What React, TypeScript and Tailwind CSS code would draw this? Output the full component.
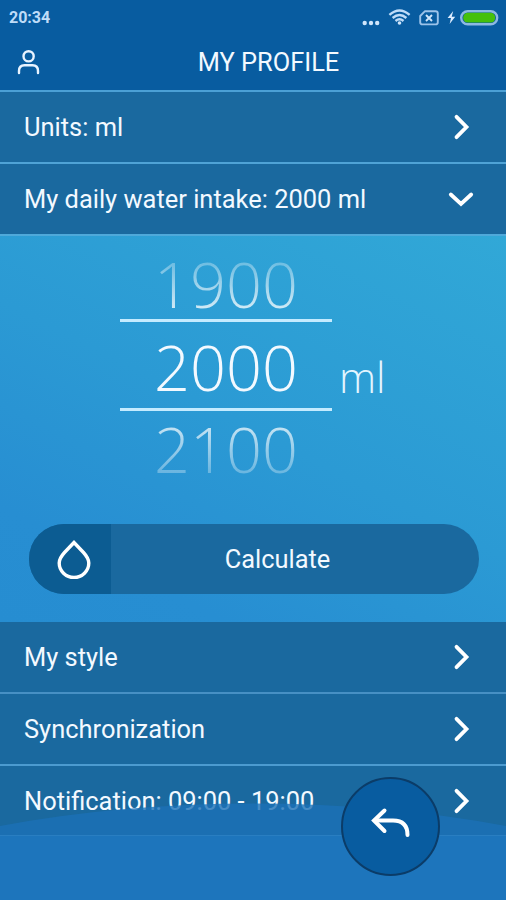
import clsx from 'clsx';

const rows = [
  { label: 'My style', border: 'border-b-[2.5px] border-[#4790c4]', height: 'h-[72px]' },
  { label: 'Synchronization', border: 'border-b-2 border-[#4c9bd0]', height: 'h-[72px]' },
  { label: 'Notification: 09:00 - 19:00', border: 'border-b border-[#5fb4e8]', height: 'h-[70px]' },
];

function Chevron({ down = false }: { down?: boolean }) {
  return (
    <svg
      className={clsx('h-[30px] w-[30px]', down && 'rotate-90')}
      viewBox="0 0 30 30"
      fill="none"
      stroke="white"
      strokeWidth="3.8"
      strokeLinecap="round"
    >
      {down ? <path d="M10.5 4.8 L20 15 L10.5 25.2" /> : <path d="M10.5 4.8 L20.5 15 L10.5 25.2" />}
    </svg>
  );
}

function Row({
  label,
  className,
  down,
}: {
  label: string;
  className?: string;
  down?: boolean;
}) {
  return (
    <div
      className={clsx(
        'flex shrink-0 items-center justify-between bg-[#1a699f] pr-[30px] pl-6',
        className
      )}
    >
      <span className="text-[25.45px] leading-8">{label}</span>
      <Chevron down={down} />
    </div>
  );
}

function StatusBar() {
  return (
    <div className="flex h-[35px] items-center justify-between pr-[7px] pl-[9px] text-[#bfdcf8]">
      <span className="mt-px text-[16px] font-bold leading-none">20:34</span>
      <svg className="h-[20px] w-[138px]" viewBox="361 8 138 20" fill="none">
        <g fill="#cfe5fb">
          <circle cx="364.7" cy="23" r="2.2" />
          <circle cx="371" cy="23" r="2.2" />
          <circle cx="377.2" cy="23" r="2.2" />
        </g>
        <g stroke="#bfdcf8" strokeWidth="2.4">
          <path d="M389.4 14.8 Q399.5 6 409.6 14.8" />
          <path d="M392.6 18 Q399.5 12 406.4 18" />
          <path d="M395.5 21 Q399.5 17.6 403.5 21" />
        </g>
        <circle cx="399.5" cy="23" r="1.8" fill="#cfe5fb" />
        <path
          d="M425 11.2 H435.5 Q437.8 11.2 437.8 13.4 V22.2 Q437.8 24.4 435.5 24.4 H422.5 Q420.2 24.4 420.2 22.2 V16 Z"
          stroke="#9cc3ea"
          strokeWidth="1.9"
          strokeLinejoin="round"
        />
        <path d="M426 15 L432 21 M432 15 L426 21" stroke="#cfe5fb" strokeWidth="1.9" />
        <path d="M453.2 11 L447.6 18 H451 L449.6 24 L455.2 16.8 H451.7 Z" fill="#dcecff" />
        <rect x="461.2" y="11.2" width="36" height="13" rx="6.5" stroke="#8db8e2" strokeWidth="2.4" />
        <rect x="463.2" y="12.8" width="32" height="9.8" rx="4.6" fill="#45c00b" />
      </svg>
    </div>
  );
}

function Picker() {
  return (
    <div className="flex h-[250px] pl-[120px] font-['Open_Sans'] font-light">
      <div className="w-[212px] text-center text-[63px]">
        <div className="h-[83px] bg-linear-to-b from-white/25 from-25% to-white/80 to-90% bg-clip-text leading-[96px] text-transparent">
          1900
        </div>
        <div className="h-[92px] border-y-[3px] border-[#c4ebff] leading-[89px]">
          2000
        </div>
        <div className="h-[75px] bg-linear-to-b from-white/80 from-10% to-white/25 to-90% bg-clip-text leading-[75px] text-transparent">
          2100
        </div>
      </div>
      <span className="mt-[113px] ml-[7px] text-[42px] leading-[56px] text-[#e3f5ff]">ml</span>
    </div>
  );
}

export default function App() {
  return (
    <div className="relative flex h-[900px] w-[506px] flex-col overflow-hidden bg-[#1c6fb5] font-[Roboto,sans-serif] text-[#f3f9ff]">
      <header className="h-[92px] shrink-0 border-b-2 border-[#4ba0d5] bg-[#085ca0]">
        <StatusBar />
        <div className="relative flex h-[55px] items-center justify-center pl-[31px]">
          <svg
            className="absolute top-[15px] left-[17px] h-[25px] w-[24px]"
            viewBox="17 50 24 25"
            fill="none"
            stroke="#e8f3ff"
            strokeWidth="2.4"
            strokeLinecap="round"
          >
            <circle cx="28.6" cy="56.3" r="5.1" />
            <path d="M19 73 V71 Q19 65.3 24.5 65.3 H32.5 Q38 65.3 38 71 V73" />
          </svg>
          <h1 className="text-[25.4px] leading-none">MY PROFILE</h1>
        </div>
      </header>

      <Row label="Units: ml" className="h-[72px] border-b-2 border-[#4fa3d6]" />
      <Row
        label="My daily water intake: 2000 ml"
        className="h-[72px] border-b-2 border-[#4fa9da]"
        down
      />

      <section className="h-[386px] shrink-0 bg-[linear-gradient(207deg,#31a8d7_0%,#2b9ad4_50%,#278ed2_82%,#268dd1_100%)]">
        <Picker />
        <button className="mt-[38px] ml-[29px] flex h-[70px] w-[450px] items-center overflow-hidden rounded-full bg-[#1a699f]">
          <span className="flex h-full w-[82px] items-center justify-center bg-[#0c5c92] pb-px pl-[7px]">
            <svg
              className="h-[42px] w-[36px]"
              viewBox="0 0 36 42"
              fill="none"
              stroke="white"
              strokeWidth="3.4"
            >
              <path d="M18 4.5 L8.5 14.5 Q3.2 20.4 3.2 25 A14.8 14.4 0 0 0 32.8 25 Q32.8 20.4 27.5 14.5 Z" />
            </svg>
          </span>
          <span className="flex-1 pr-[35px] text-center text-[25.4px] leading-8">Calculate</span>
        </button>
      </section>

      {rows.map((row) => (
        <Row key={row.label} label={row.label} className={clsx(row.height, row.border)} />
      ))}

      {/* Water surface behind the back button */}
      <svg
        className="pointer-events-none absolute bottom-0 left-0 h-[100px] w-full"
        viewBox="0 0 506 100"
      >
        <path d="M0 26 Q120 3.5 253 3.5 Q386 3.5 506 26 V100 H0 Z" fill="#1b70b7" fillOpacity="0.8" />
        <path d="M0 36 H506 V100 H0 Z" fill="#1e77be" fillOpacity="0.8" />
      </svg>

      <button className="absolute top-[777px] left-[341px] h-[99px] w-[99px] rounded-full border-[2.5px] border-[#0b3c68] bg-[#085ca0]">
        <svg
          className="absolute top-[27px] left-[27px] h-[36px] w-[44px]"
          viewBox="370 806 44 36"
          fill="none"
          stroke="white"
          strokeWidth="4"
          strokeLinecap="round"
        >
          <path d="M384.5 810.5 L374 820.5 L384.5 831" />
          <path d="M375 820.5 H393 Q407.5 820.5 407.5 835" />
        </svg>
      </button>
    </div>
  );
}
